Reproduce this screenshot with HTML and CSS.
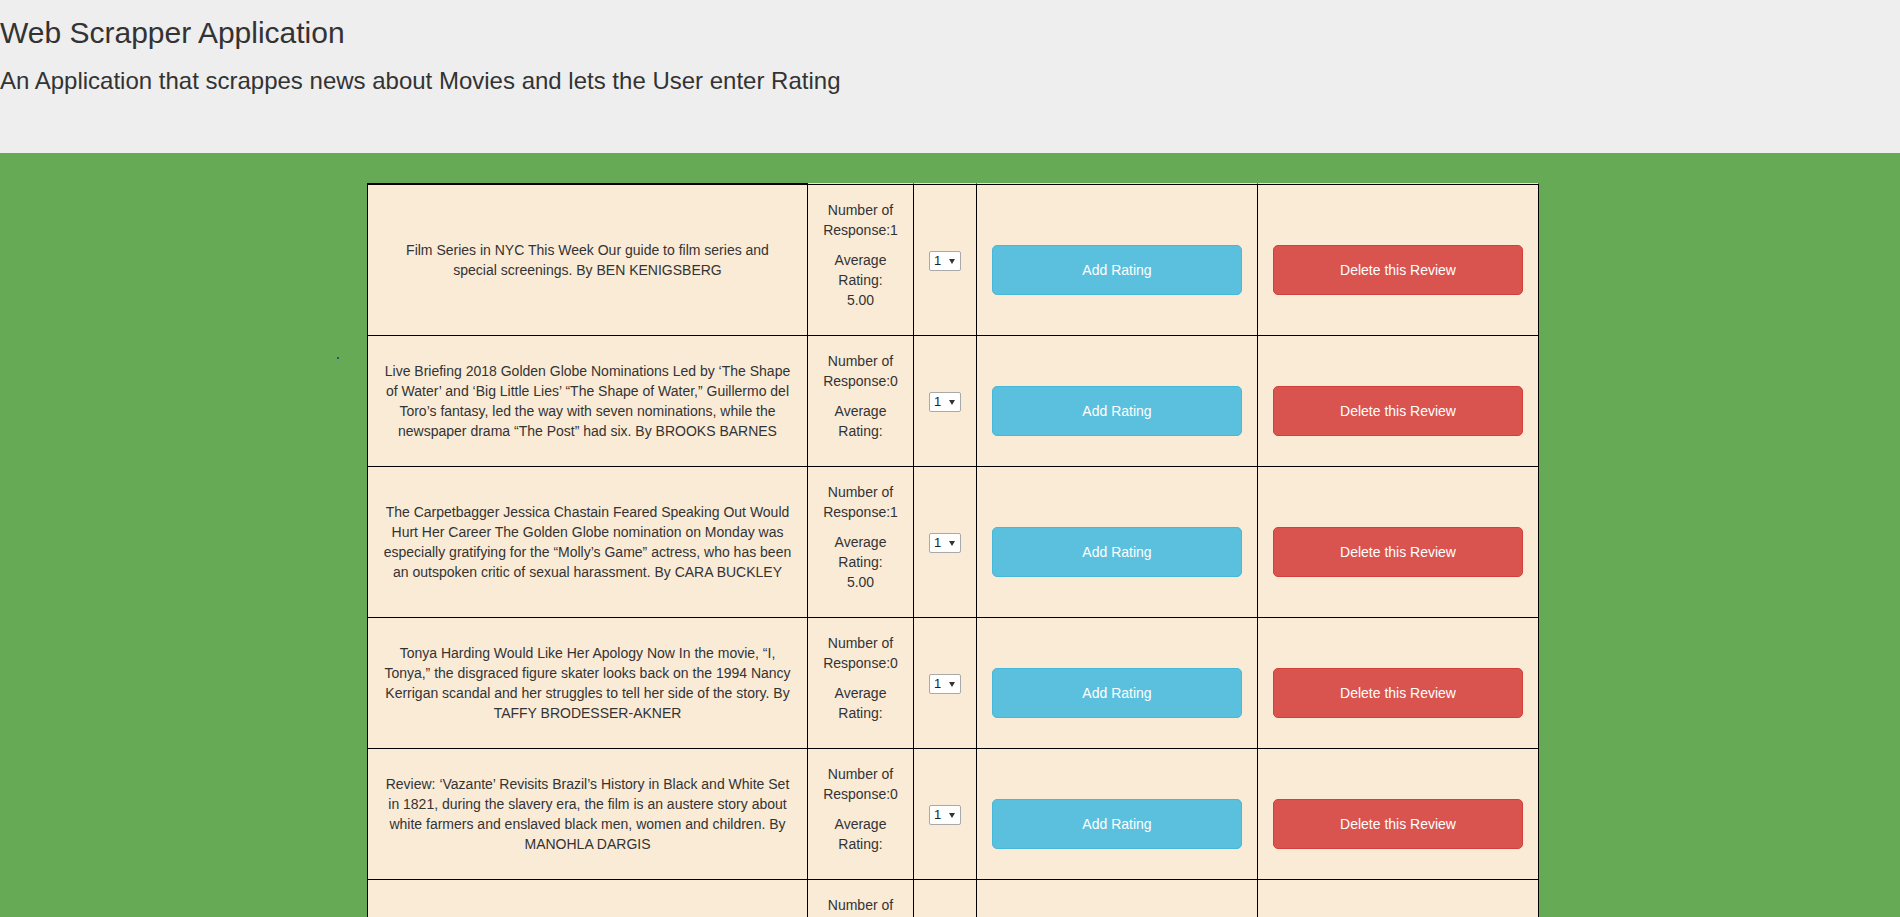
FILE: index.html
```html
<!DOCTYPE html>
<html lang="en">
<head>
<meta charset="utf-8">
<title>Web Scrapper Application</title>
<link rel="stylesheet" href="styles.css">
</head>
<body>
<header class="jumbo">
  <h2 class="title">Web Scrapper Application</h2>
  <p class="lead">An Application that scrappes news about Movies and lets the User enter Rating</p>
</header>
<main class="main">
  <span class="stray-dot"></span>
  <table class="reviews">
    <colgroup>
      <col class="c-text"><col class="c-num"><col class="c-sel"><col class="c-add"><col class="c-del">
    </colgroup>
    <tbody>
      <tr class="first">
        <td class="text">Film Series in NYC This Week Our guide to film series and special screenings. By BEN KENIGSBERG</td>
        <td class="num"><p>Number of Response:1</p><p>Average Rating: 5.00</p></td>
        <td class="sel"><span class="select"><select><option>1</option><option>2</option><option>3</option><option>4</option><option>5</option></select></span></td>
        <td class="act"><button class="btn btn-info">Add Rating</button></td>
        <td class="act"><button class="btn btn-danger">Delete this Review</button></td>
      </tr>
      <tr>
        <td class="text">Live Briefing 2018 Golden Globe Nominations Led by ‘The Shape of Water’ and ‘Big Little Lies’ “The Shape of Water,” Guillermo del Toro’s fantasy, led the way with seven nominations, while the newspaper drama “The Post” had six. By BROOKS BARNES</td>
        <td class="num"><p>Number of Response:0</p><p>Average Rating: </p></td>
        <td class="sel"><span class="select"><select><option>1</option><option>2</option><option>3</option><option>4</option><option>5</option></select></span></td>
        <td class="act"><button class="btn btn-info">Add Rating</button></td>
        <td class="act"><button class="btn btn-danger">Delete this Review</button></td>
      </tr>
      <tr>
        <td class="text">The Carpetbagger Jessica Chastain Feared Speaking Out Would Hurt Her Career The Golden Globe nomination on Monday was especially gratifying for the “Molly’s Game” actress, who has been an outspoken critic of sexual harassment. By CARA BUCKLEY</td>
        <td class="num"><p>Number of Response:1</p><p>Average Rating: 5.00</p></td>
        <td class="sel"><span class="select"><select><option>1</option><option>2</option><option>3</option><option>4</option><option>5</option></select></span></td>
        <td class="act"><button class="btn btn-info">Add Rating</button></td>
        <td class="act"><button class="btn btn-danger">Delete this Review</button></td>
      </tr>
      <tr>
        <td class="text">Tonya Harding Would Like Her Apology Now In the movie, “I, Tonya,” the disgraced figure skater looks back on the 1994 Nancy Kerrigan scandal and her struggles to tell her side of the story. By TAFFY BRODESSER-AKNER</td>
        <td class="num"><p>Number of Response:0</p><p>Average Rating: </p></td>
        <td class="sel"><span class="select"><select><option>1</option><option>2</option><option>3</option><option>4</option><option>5</option></select></span></td>
        <td class="act"><button class="btn btn-info">Add Rating</button></td>
        <td class="act"><button class="btn btn-danger">Delete this Review</button></td>
      </tr>
      <tr>
        <td class="text">Review: ‘Vazante’ Revisits Brazil’s History in Black and White Set in 1821, during the slavery era, the film is an austere story about white farmers and enslaved black men, women and children. By MANOHLA DARGIS</td>
        <td class="num"><p>Number of Response:0</p><p>Average Rating: </p></td>
        <td class="sel"><span class="select"><select><option>1</option><option>2</option><option>3</option><option>4</option><option>5</option></select></span></td>
        <td class="act"><button class="btn btn-info">Add Rating</button></td>
        <td class="act"><button class="btn btn-danger">Delete this Review</button></td>
      </tr>
      <tr>
        <td class="text">What’s on TV This Week: ‘The Crown’ and ‘Star Wars’ Specials. By KATHRYN SHATTUCK</td>
        <td class="num"><p>Number of Response:1</p><p>Average Rating: 4.00</p></td>
        <td class="sel"><span class="select"><select><option>1</option><option>2</option><option>3</option><option>4</option><option>5</option></select></span></td>
        <td class="act"><button class="btn btn-info">Add Rating</button></td>
        <td class="act"><button class="btn btn-danger">Delete this Review</button></td>
      </tr>
    </tbody>
  </table>
</main>
</body>
</html>
```
FILE: styles.css
```css
* { box-sizing: border-box; }

html, body {
  margin: 0;
  padding: 0;
}

body {
  font-family: "Liberation Sans", Arial, Helvetica, sans-serif;
  font-size: 14px;
  line-height: 20px;
  color: #333;
  background: #67aa55;
}

.jumbo {
  background: #eeeeee;
  padding: 16px 0 59px 0;
}

.title {
  margin: 0;
  font-size: 30px;
  line-height: 33px;
  font-weight: 400;
  color: #333;
}

.lead {
  margin: 19px 0 0 0;
  font-size: 24px;
  line-height: 26px;
  font-weight: 400;
  color: #333;
}

.main {
  position: relative;
  background: #67aa55;
  padding: 30px 0 40px 0;
}

.stray-dot {
  position: absolute;
  left: 337px;
  top: 204px;
  width: 2px;
  height: 2px;
  background: #2b4f8a;
}

.reviews {
  border-collapse: separate;
  border-spacing: 0;
  table-layout: fixed;
  width: 1171px;
  margin-left: calc(50% - 583px);
  border-left: 1px solid #000;
  background: #faebd7;
}

.c-text { width: 440px; }
.c-num { width: 106px; }
.c-sel { width: 63px; }
.c-add { width: 281px; }
.c-del { width: 281px; }

.reviews td {
  padding: 15px;
  border-right: 1px solid #000;
  border-bottom: 1px solid #000;
  vertical-align: middle;
  text-align: center;
  background: #faebd7;
}

.reviews td.act {
  padding-top: 35px;
}

.reviews tr.first td {
  border-top: 1px solid #dde9d6;
  padding-top: 16px;
  background: linear-gradient(#000, #000) top left / 100% 1px no-repeat, #faebd7;
}

.reviews tr.first td.act {
  padding-top: 36px;
}

.reviews tr.first td:first-child {
  border-top: 2px solid #000;
  padding-top: 15px;
  background: #faebd7;
}

.num p {
  margin: 0 0 10px 0;
}

.sel {
  text-align: left;
}

.select {
  position: relative;
  display: inline-block;
  width: 32px;
  height: 20px;
  vertical-align: middle;
}

.select select {
  -webkit-appearance: none;
  appearance: none;
  display: block;
  width: 32px;
  height: 20px;
  margin: 0;
  padding: 0 0 0 4px;
  border: 1px solid #a9a9a9;
  border-radius: 2px;
  background: #fff;
  font-family: "Liberation Sans", Arial, sans-serif;
  font-size: 13px;
  line-height: 18px;
  color: #222;
}

.select::after {
  content: "";
  position: absolute;
  right: 6px;
  top: 8px;
  width: 0;
  height: 0;
  border-left: 3px solid transparent;
  border-right: 3px solid transparent;
  border-top: 5px solid #333;
  pointer-events: none;
}

.btn {
  display: block;
  width: 100%;
  height: 50px;
  margin: 0;
  padding: 0 12px;
  border: 1px solid transparent;
  border-radius: 5px;
  font-family: "Liberation Sans", Arial, sans-serif;
  font-size: 14px;
  line-height: 20px;
  color: #fff;
  text-align: center;
  cursor: pointer;
}

.btn-info {
  background: #5bc0de;
  border-color: #46b8da;
}

.btn-danger {
  background: #d9534f;
  border-color: #d43f3a;
}
```
